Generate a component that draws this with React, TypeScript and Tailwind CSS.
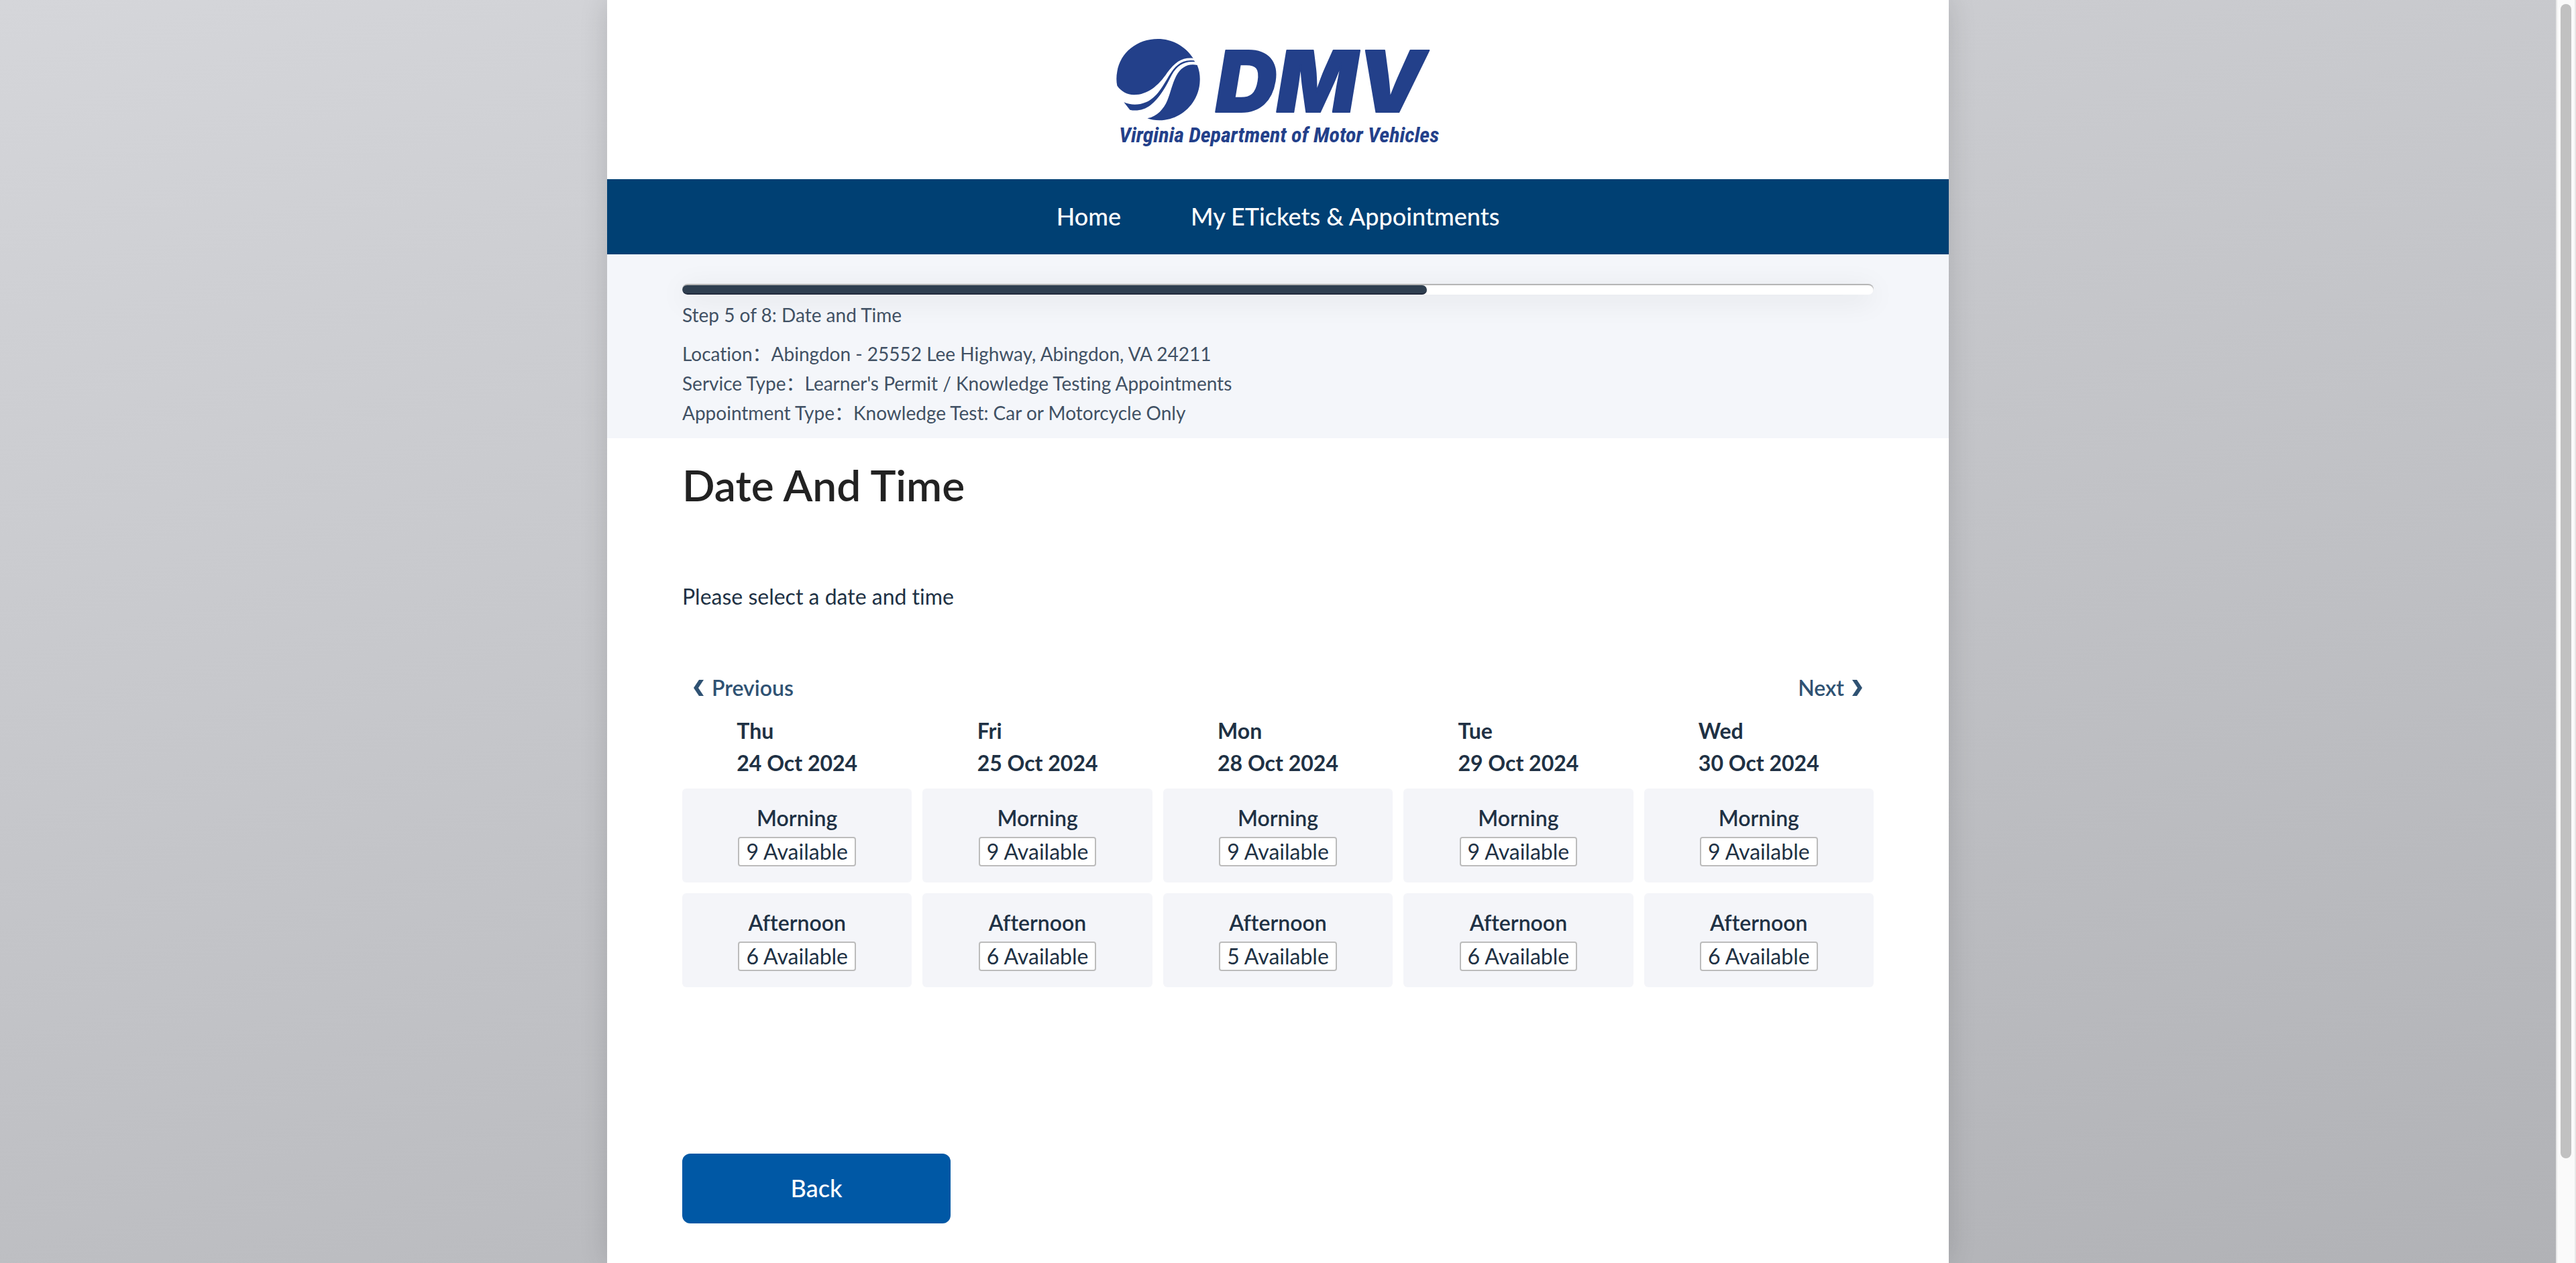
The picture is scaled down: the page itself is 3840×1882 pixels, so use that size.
import React from "react";

type Day = { weekday: string; date: string; morning: number; afternoon: number };

const DAYS: Day[] = [
  { weekday: "Thu", date: "24 Oct 2024", morning: 9, afternoon: 6 },
  { weekday: "Fri", date: "25 Oct 2024", morning: 9, afternoon: 6 },
  { weekday: "Mon", date: "28 Oct 2024", morning: 9, afternoon: 5 },
  { weekday: "Tue", date: "29 Oct 2024", morning: 9, afternoon: 6 },
  { weekday: "Wed", date: "30 Oct 2024", morning: 9, afternoon: 6 },
];

const SUMMARY = [
  { label: "Location", value: "Abingdon - 25552 Lee Highway, Abingdon, VA 24211" },
  { label: "Service Type", value: "Learner's Permit / Knowledge Testing Appointments" },
  { label: "Appointment Type", value: "Knowledge Test: Car or Motorcycle Only" },
];

const STEP = 5;
const STEPS = 8;

function Logo() {
  return (
    <svg viewBox="0 0 490 180" className="h-[180px] w-[490px] overflow-visible" fill="#23408a" role="img" aria-label="DMV, Virginia Department of Motor Vehicles">
      <g transform="scale(0.3333)">
        <path d="M16 233C12 215 12 190 16 170C30 85 105 24 198 24C262 24 320 56 356 110C310 105 275 125 240 175C200 235 150 275 90 274C60 272 35 260 16 233Z" />
        <path d="M46 307C75 320 110 322 145 307C195 285 220 235 250 185C275 145 305 113 360 121L364 127C320 122 285 140 260 185C235 235 205 290 165 320C140 340 105 348 73 341Z" />
        <path d="M151 379C195 372 225 335 240 300C255 265 262 225 280 190C300 150 335 132 374 141C384 165 387 190 386 210C384 310 300 388 205 388C185 388 165 385 151 379Z" />
      </g>
      <text x="152" y="117" className="font-['Inter',sans-serif] text-[126px] font-black italic" stroke="#23408a" strokeWidth="2" strokeLinejoin="round">
        DMV
      </text>
      <text x="8" y="162" className="font-['Roboto_Condensed','Roboto',sans-serif] text-[32px] font-bold italic">
        Virginia Department of Motor Vehicles
      </text>
    </svg>
  );
}

function Slot({ name, count }: { name: string; count: number }) {
  return (
    <button type="button" className="flex flex-col items-center gap-2 rounded-md bg-[#f4f5f9] py-6 text-[32px] text-[#203144]">
      <span className="font-semibold leading-10">{name}</span>
      <span className="rounded border-2 border-[#bcbcbc] bg-white px-2.5 leading-10">{count} Available</span>
    </button>
  );
}

function Scrollbar() {
  return (
    <div aria-hidden="true" className="sticky top-0 h-screen w-[30px] shrink-0 border-x-2 border-[#e8e8e8] bg-[#fafafa] py-1.5">
      <div className="mx-auto h-[92%] w-4 rounded-full bg-[#c1c1c1]" />
    </div>
  );
}

export default function App() {
  return (
    <div className="flex min-h-screen font-['Lato','Noto_Sans_CJK_SC',sans-serif] [font-variant-ligatures:none]">
      <div className="flex flex-1 justify-center bg-[linear-gradient(165deg,#d5d6da,#b1b2b6)]">
        <div className="w-full max-w-[2000px] bg-white shadow-[0_0_40px_rgba(0,0,0,0.14)]">
          <header>
            <div className="flex justify-center pt-[50px] pb-[37px]">
              <Logo />
            </div>
            <nav className="flex h-28 items-center justify-center gap-[104px] bg-[#004073] pb-0.5 text-4xl font-medium text-white">
              <a href="#home">Home</a>
              <a href="#appointments">My ETickets &amp; Appointments</a>
            </nav>
          </header>

          <section className="bg-[#f4f6fa] px-28 pt-11 pb-4 text-[28px] leading-[44px] text-[#415164]">
            <div
              role="progressbar"
              aria-label="Booking progress"
              aria-valuemin={0}
              aria-valuemax={STEPS}
              aria-valuenow={STEP}
              className="h-4 overflow-hidden rounded-lg bg-white pt-0.5 shadow-[0_8px_40px_rgba(0,0,0,0.1),inset_0_2px_1px_rgba(0,0,0,0.3)]"
            >
              <div className="h-full rounded-lg border-b-2 border-[#232c3e] bg-[#2f3f50]" style={{ width: `${(STEP / STEPS) * 100}%` }} />
            </div>
            <p className="mt-2">Step 5 of 8: Date and Time</p>
            <dl className="mt-3.5">
              {SUMMARY.map(({ label, value }) => (
                <div key={label} className="flex">
                  <dt>{label}：</dt>
                  <dd>{value}</dd>
                </div>
              ))}
            </dl>
          </section>

          <main className="px-28 pt-[30px] pb-12 text-[32px] leading-[48px] text-[#203144]">
            <h1 className="text-[64px] leading-[80px] font-semibold text-[#222222]">Date And Time</h1>
            <p className="mt-[102px]">Please select a date and time</p>

            <div className="mt-[88px] flex justify-between px-4 font-semibold text-[#2f5273]">
              <button type="button" className="flex items-center gap-3">
                <svg viewBox="0 0 16 24" className="h-6 w-4" fill="currentColor" aria-hidden="true">
                  <path d="M9 0H16L8 12L16 24H9L1 12Z" />
                </svg>
                Previous
              </button>
              <button type="button" className="flex items-center gap-3">
                Next
                <svg viewBox="0 0 16 24" className="h-6 w-4" fill="currentColor" aria-hidden="true">
                  <path d="M7 0H0L8 12L0 24H7L15 12Z" />
                </svg>
              </button>
            </div>

            <div className="mt-4 grid grid-cols-5 gap-4">
              {DAYS.map((day) => (
                <section key={day.date} className="flex flex-col gap-4">
                  <h2 className="-mb-0.5 self-center font-bold">
                    {day.weekday}
                    <br />
                    {day.date}
                  </h2>
                  <Slot name="Morning" count={day.morning} />
                  <Slot name="Afternoon" count={day.afternoon} />
                </section>
              ))}
            </div>

            <button type="button" className="mt-[248px] block h-[104px] w-[400px] rounded-xl bg-[#0058a5] pb-0.5 text-4xl font-medium text-white">
              Back
            </button>
          </main>
        </div>
      </div>
      <Scrollbar />
    </div>
  );
}
